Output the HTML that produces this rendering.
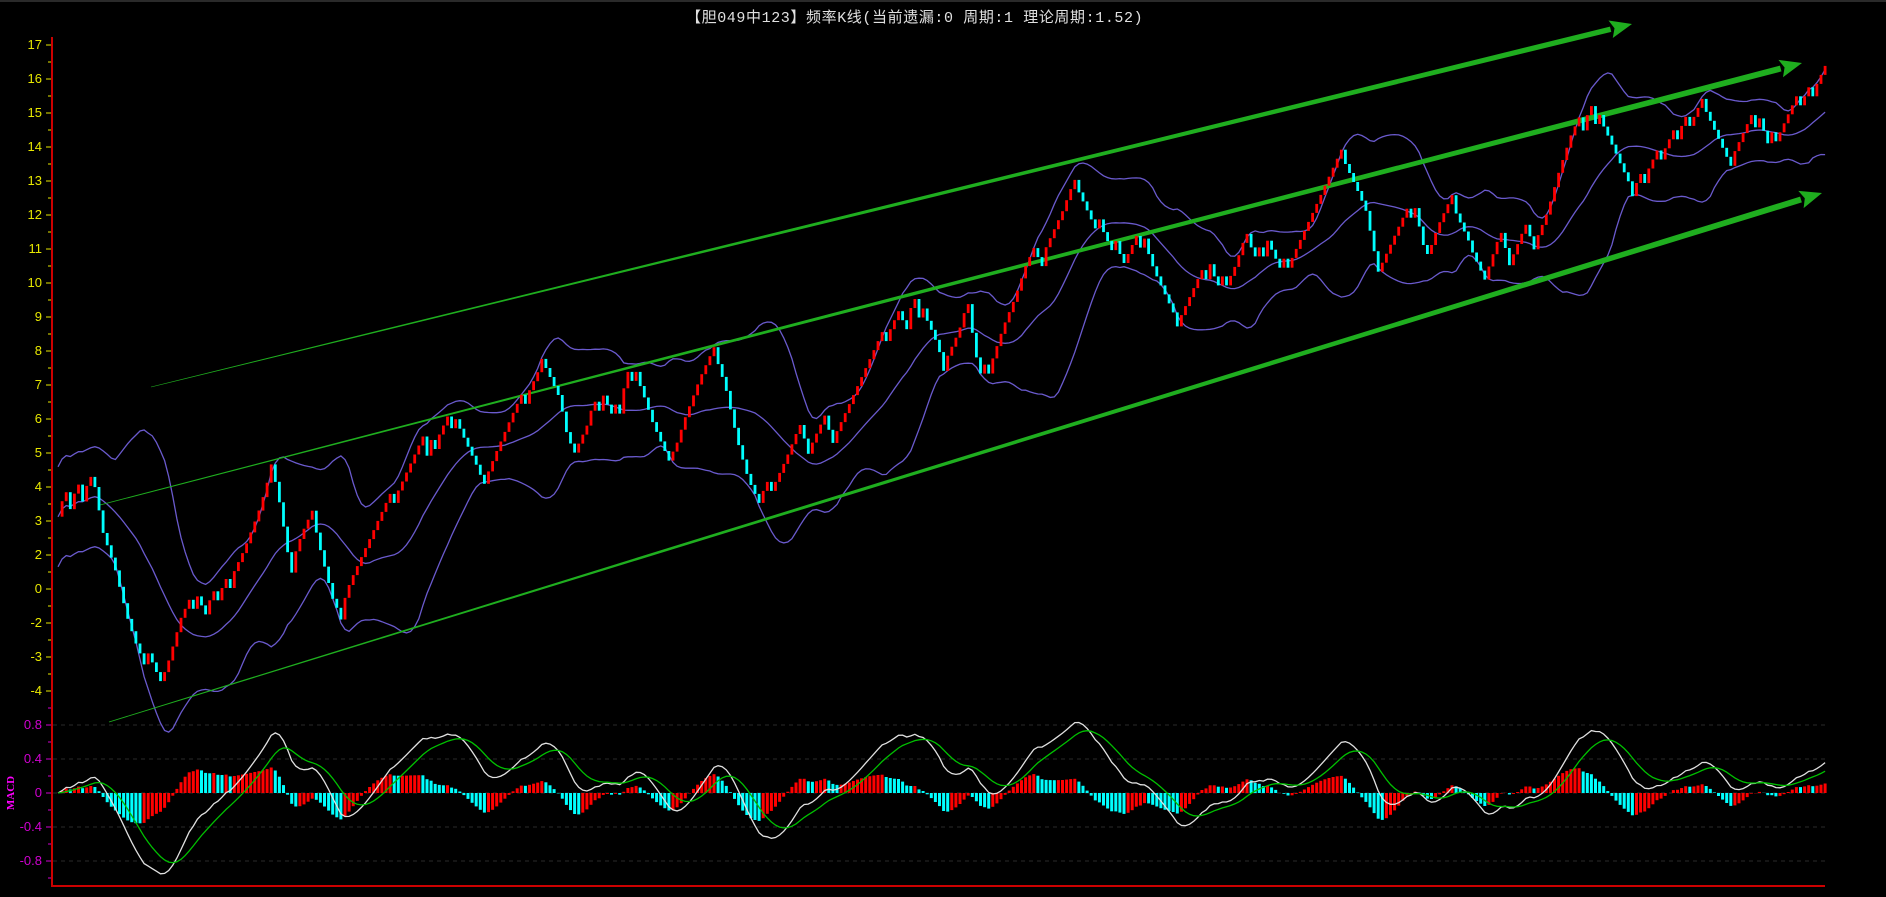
<!DOCTYPE html>
<html><head><meta charset="utf-8"><style>
html,body{margin:0;padding:0;background:#000;width:1886px;height:897px;overflow:hidden}
#c{position:absolute;left:0;top:0}
.t{position:absolute;left:686px;top:6px;font:15px "Liberation Mono","Noto Sans CJK SC",monospace;color:#e0e0e0;letter-spacing:0.6px;white-space:nowrap}
.yl{position:absolute;width:40px;text-align:right;font:13px "Liberation Sans",sans-serif;color:#e8e800}
.ml{position:absolute;width:40px;text-align:right;font:13px "Liberation Sans",sans-serif;color:#d000d0}
.macd{position:absolute;left:-6px;top:787px;transform:rotate(-90deg);font:bold 11px "Liberation Serif",serif;color:#ff00ff}
</style></head><body>
<div style="position:absolute;left:0;top:0;width:1886px;height:2px;background:#2a2a2a"></div>
<svg id="c" width="1886" height="897" xmlns="http://www.w3.org/2000/svg"></svg>
<div class="t">【胆049中123】频率K线(当前遗漏:0 周期:1 理论周期:1.52)</div>
<div id="labels"></div>
<div class="macd">MACD</div>
<script>
const svg=document.getElementById('c');let h='';
const L=document.getElementById('labels');let lh='';
const ylab=['17','16','15','14','13','12','11','10','9','8','7','6','5','4','3','2','0','-2','-3','-4'];
for(let i=0;i<ylab.length;i++){const y=45+i*34;lh+=`<div class="yl" style="left:2px;top:${y-8}px">${ylab[i]}</div>`;
h+=`<line x1="46" y1="${y}" x2="52" y2="${y}" stroke="#e8e800"/>`;if(i<ylab.length-1)h+=`<line x1="48" y1="${y+17}" x2="52" y2="${y+17}" stroke="#e8e800"/>`;}
h+=`<line x1="48" y1="${45+19*34+17}" x2="52" y2="${45+19*34+17}" stroke="#ff00ff"/>`;
const ml=['0.8','0.4','0','-0.4','-0.8'];
for(let i=0;i<5;i++){const y=725+i*34;lh+=`<div class="ml" style="left:2px;top:${y-8}px">${ml[i]}</div>`;
h+=`<line x1="46" y1="${y}" x2="52" y2="${y}" stroke="#d000d0"/>`;h+=`<line x1="53" y1="${y}" x2="1825" y2="${y}" stroke="#2a2a2a" stroke-dasharray="4,4"/>`;}
for(let i=0;i<6;i++){const y=708+i*34;h+=`<line x1="48" y1="${y}" x2="52" y2="${y}" stroke="#d000d0"/>`;}
L.innerHTML=lh;
h+=`<line x1="52" y1="37" x2="52" y2="887" stroke="#cc0000" stroke-width="2"/><line x1="51" y1="886" x2="1825" y2="886" stroke="#cc0000" stroke-width="2"/>`;
const P=[48,420,72,405,78,400,85,440,95,470,105,510,115,540,125,545,133,565,140,545,150,510,160,495,170,500,180,490,190,480,200,460,215,420,225,385,232,420,240,470,250,440,258,425,265,455,275,495,282,505,290,480,300,460,315,425,330,405,345,375,360,365,372,345,385,360,400,400,410,375,425,340,440,320,448,300,460,315,470,365,480,375,490,335,500,330,510,345,520,305,530,320,540,350,555,385,565,350,580,310,592,295,600,320,610,365,620,400,630,410,640,405,650,380,660,355,670,370,680,350,690,360,700,345,710,320,720,300,730,280,745,262,760,255,770,270,780,300,790,285,800,250,810,310,820,300,830,270,840,245,850,215,865,205,875,185,888,150,900,175,915,195,930,215,945,195,955,225,965,245,975,265,985,245,1000,220,1010,240,1020,225,1030,195,1040,215,1050,200,1060,225,1075,205,1085,185,1095,155,1110,130,1120,150,1130,175,1140,225,1150,205,1160,185,1170,170,1180,215,1190,185,1200,170,1210,185,1220,215,1230,225,1240,195,1250,215,1260,190,1270,200,1280,175,1290,140,1300,110,1310,100,1320,95,1330,110,1340,135,1350,155,1360,145,1370,130,1380,120,1390,105,1400,95,1410,90,1420,110,1430,130,1440,120,1450,95,1460,110,1470,115,1480,95,1490,80,1500,75,1510,55,1515,32];
const S=1.209;const px=[],py=[];for(let i=0;i<P.length;i+=2){px.push(P[i]*S);py.push(P[i+1]*S);}
function f(x){if(x<=px[0])return py[0];for(let i=1;i<px.length;i++){if(x<=px[i]){const t=(x-px[i-1])/(px[i]-px[i-1]);return py[i-1]+t*(py[i]-py[i-1]);}}return py[py.length-1];}
const N=432,st=4.1,x0=58;const c=[];
for(let i=0;i<N;i++){const x=x0+i*st;const sl=Math.abs(f(x+4)-f(x-4));const z=sl<7?((i%3==0)?9:-4):0;c.push(f(x)+z);}
const up=[],md=[],lo=[];
for(let i=0;i<N;i++){const a=Math.max(0,i-19);let s=0,n=0;for(let j=a;j<=i;j++){s+=c[j];n++;}const m=s/n;let v=0;for(let j=a;j<=i;j++)v+=(c[j]-m)**2;let sd=Math.sqrt(v/n);if(n<20)sd=Math.max(sd,25);md.push(m);up.push(m-2*sd);lo.push(m+2*sd);}
function pl(a,col){let d='';for(let i=0;i<N;i++)d+=(i?'L':'M')+(x0+i*st).toFixed(1)+','+a[i].toFixed(1);return `<path d="${d}" fill="none" stroke="${col}" stroke-width="1.3"/>`;}
h+=pl(up,'#6a5acd')+pl(md,'#6a5acd')+pl(lo,'#6a5acd');
function tl(x1,y1,x2,y2,w1,w2){const dx=x2-x1,dy=y2-y1,l=Math.hypot(dx,dy),nx=-dy/l,ny=dx/l,ux=dx/l,uy=dy/l;
const bx=x2-ux*22,by=y2-uy*22;
let s=`<polygon points="${x1+nx*w1/2},${y1+ny*w1/2} ${bx+nx*w2/2},${by+ny*w2/2} ${bx-nx*w2/2},${by-ny*w2/2} ${x1-nx*w1/2},${y1-ny*w1/2}" fill="#1fae1f"/>`;
s+=`<polygon points="${x2},${y2} ${bx+nx*9},${by+ny*9} ${bx+ux*4},${by+uy*4} ${bx-nx*9},${by-ny*9}" fill="#1fae1f"/>`;return s;}
h+=tl(151,387,1632,24,0.6,5.5)+tl(100,505,1802,63,0.8,6)+tl(109,722,1822,193,0.8,6);
for(let i=1;i<N;i++){const x=x0+i*st;let a=c[i-1],b=c[i];let up_=b<a;if(Math.abs(b-a)<9){b=a+(up_?-9:9);c[i]=b;}
const y=Math.min(a,b),hh=Math.abs(b-a);h+=`<rect x="${(x-1.4).toFixed(1)}" y="${y.toFixed(1)}" width="2.8" height="${hh.toFixed(1)}" fill="${up_?'#ff0000':'#00ffff'}"/>`;}
const v=c.map(q=>-q);function ema(a,n){const k=2/(n+1);const r=[a[0]];for(let i=1;i<a.length;i++)r.push(r[i-1]+k*(a[i]-r[i-1]));return r;}
const e12=ema(v,12),e26=ema(v,26);const dif=e12.map((q,i)=>q-e26[i]);const dea=ema(dif,9);
let mx=0;for(const q of dif)mx=Math.max(mx,Math.abs(q));const sc=0.95*85/mx;const zy=793;
let hist=dif.map((q,i)=>1.1*(q-dea[i]));
for(let i=1;i<N;i++){const x=x0+i*st;const hv=hist[i]*sc;const col=hist[i]>hist[i-1]?'#ff0000':'#00ffff';
h+=`<rect x="${(x-1.5).toFixed(1)}" y="${Math.min(zy,zy-hv).toFixed(1)}" width="3" height="${Math.abs(hv).toFixed(1)}" fill="${col}"/>`;}
function ml2(a,col){let d='';for(let i=0;i<N;i++)d+=(i?'L':'M')+(x0+i*st).toFixed(1)+','+(zy-a[i]*sc).toFixed(1);return `<path d="${d}" fill="none" stroke="${col}" stroke-width="1.3"/>`;}
h+=ml2(dif,'#e0e0e0')+ml2(dea,'#00c000');
svg.innerHTML=h;
</script>
</body></html>
